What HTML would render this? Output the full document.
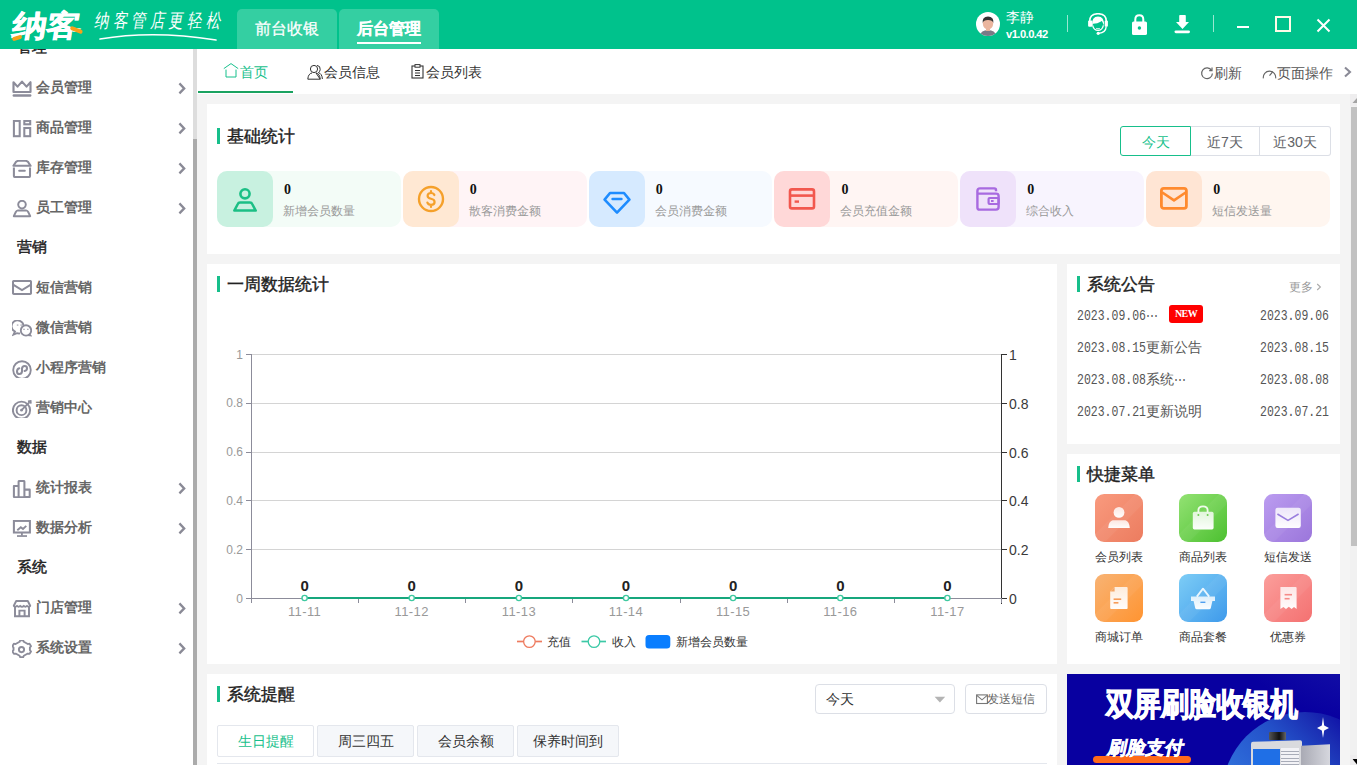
<!DOCTYPE html>
<html><head><meta charset="utf-8">
<style>
*{margin:0;padding:0;box-sizing:border-box}
html,body{width:1357px;height:765px;overflow:hidden;background:#f4f4f4;font-family:"Liberation Sans",sans-serif;color:#333}
.abs{position:absolute}
#hdr{position:absolute;left:0;top:0;width:1357px;height:49px;background:#00c28c}
.htab{position:absolute;top:9px;height:40px;background:#34cfa2;-webkit-text-stroke:0.25px #fff;border-radius:5px 5px 0 0;color:#fff;font-size:16px;line-height:40px;text-align:center}
#side{position:absolute;left:0;top:49px;width:193px;height:716px;background:#fff;overflow:hidden}
.si{position:absolute;left:0;width:193px;height:40px}
.si .ic{position:absolute;left:12px;top:12.5px;width:20px;height:18px}
.si .tx{position:absolute;left:36px;top:0;line-height:40px;font-size:14px;color:#666;font-weight:bold}
.si .ch{position:absolute;left:177px;top:15px}
.sh{position:absolute;left:17px;font-size:15px;color:#222;line-height:40px;font-weight:normal;-webkit-text-stroke:0.45px #222}
#tabbar{position:absolute;left:197px;top:49px;width:1160px;height:45px;background:#fff}
.card{position:absolute;background:#fff}
.ttl{position:absolute;left:10px;font-size:17px;color:#222;font-weight:normal;-webkit-text-stroke:0.4px #222;line-height:21px;padding-left:10px}
.ttl:before{content:"";position:absolute;left:0;top:2px;width:3px;height:16px;background:#17bf8b}
.st{position:relative;flex:1;height:56px;border-radius:10px}
.sti{position:absolute;left:0;top:0;width:56px;height:56px;border-radius:10px;display:flex;align-items:center;justify-content:center}
.stn{position:absolute;left:67px;top:10px;font-size:14px;font-weight:bold;color:#111;font-family:"Liberation Serif",serif;line-height:18px}
.stl{position:absolute;left:66px;top:31px;font-size:12px;color:#999;line-height:18px}
.btng{display:flex;height:30px}
.bt{height:30px;border:1px solid #dcdfe6;font-size:14px;color:#606266;text-align:center;line-height:30px}
.bt:first-child{border-radius:3px 0 0 3px}.bt:last-child{border-radius:0 3px 3px 0}
.bt.act{border-color:#17bf8b;color:#17bf8b}
.nr{position:absolute;left:10px;font-family:"Liberation Mono",monospace;font-size:11.5px;color:#555;line-height:20px;white-space:nowrap}
.nd{position:absolute;left:193px;font-family:"Liberation Mono",monospace;font-size:11.5px;color:#555;line-height:20px}
.cj{font-size:13.6px;font-family:"Liberation Sans",sans-serif;position:relative;top:-0.5px}.dg{display:inline-block;transform:scaleY(1.24);transform-origin:50% 60%}.el{display:inline-block;width:12.5px;font-size:12px;text-align:center;font-family:"Liberation Sans",sans-serif}
.nw{width:34px;height:17.6px;background:#f00;border-radius:3px;color:#fff;font-family:"Liberation Serif",serif;font-weight:bold;font-size:10px;line-height:17.6px;text-align:center;letter-spacing:-0.6px}
.ql{position:absolute;width:80px;text-align:center;font-size:12.3px;color:#333;line-height:20px}
.rt{top:51px;height:32px;border:1px solid #e4e7ed;background:#f5f7fa;font-size:14px;color:#333;text-align:center;line-height:30px;border-radius:2px}
.rt.act{background:#fff;color:#17bf8b}
</style></head><body>
<div id="hdr">
  
  <div class="abs" style="left:8px;top:3px;width:84px;height:42px;overflow:hidden">
    <div class="abs" style="left:8px;top:2px;font-size:30px;font-weight:700;color:#fff;-webkit-text-stroke:0.5px #fff;letter-spacing:-1px;transform:skewX(-9deg) scaleX(1.16);transform-origin:0 0;line-height:42px;white-space:nowrap">纳客</div>
    <div class="abs" style="left:4px;top:33px;width:10px;height:3.5px;background:#f7a11a;transform:rotate(-18deg);border-radius:2px"></div>
    <div class="abs" style="left:62px;top:25px;width:13px;height:3.5px;background:#f7a11a;transform:rotate(22deg);border-radius:2px"></div>
  </div>
  <div class="abs" style="left:97px;top:10px;font-size:14.5px;color:#fff;font-weight:300;letter-spacing:3.6px;transform:skewX(-10deg) scaleY(1.32);transform-origin:0 0;line-height:16px;white-space:nowrap">纳客管店更轻松</div>
  <svg class="abs" style="left:98px;top:30px" width="126" height="14" viewBox="0 0 126 14"><path d="M2 9 Q55 0 118 10" fill="none" stroke="#fff" stroke-width="1.6" stroke-linecap="round"/></svg>
  <svg class="abs" style="left:976px;top:12px" width="24" height="24" viewBox="0 0 24 24"><defs><clipPath id="av"><circle cx="12" cy="12" r="12"/></clipPath></defs><circle cx="12" cy="12" r="12" fill="#fff"/><g clip-path="url(#av)"><path d="M3 26 Q4 18 12 18 Q20 18 21 26 Z" fill="#7a7a86"/><rect x="10" y="14" width="4" height="5" fill="#e8b49c"/><ellipse cx="12" cy="11.5" rx="5.2" ry="6" fill="#eab59e"/><path d="M6.6 11 Q6 4.5 12 4.4 Q18 4.5 17.4 11 Q16.6 8 12 8 Q7.4 8 6.6 11 Z" fill="#333"/></g></svg>
  <div class="abs" style="left:1006px;top:8px;font-size:14px;color:#fff;line-height:18px">李静</div>
  <div class="abs" style="left:1006px;top:27px;font-size:11.2px;color:#fff;font-weight:bold;line-height:14px;letter-spacing:-0.55px">v1.0.0.42</div>
  <div class="abs" style="left:1067px;top:15px;width:1px;height:17px;background:rgba(255,255,255,0.6)"></div>
  <svg class="abs" style="left:1087px;top:13px" width="22" height="23" viewBox="0 0 22 23"><path d="M2.6 8.4 Q2.6 0.7 11 0.7 Q19.4 0.7 19.4 8.4" fill="none" stroke="#fff" stroke-width="1.5"/><rect x="1.1" y="7.6" width="4.2" height="6.2" rx="1" fill="#fff"/><rect x="17.7" y="7.6" width="3.2" height="6.2" rx="1" fill="#fff"/><path d="M5 12.4 Q4.6 3.6 11 3.6 Q17.4 3.6 17 12.6 L15.4 9 Q14.8 7.6 14 8.4 Q10.5 10.6 6.2 10.8 Z" fill="#fff"/><path d="M5.6 12.4 Q6.8 17.4 11 17.4 Q15.2 17.4 16.4 12.4" fill="none" stroke="#fff" stroke-width="1.3"/><path d="M9.2 15.4 Q11 16.2 12.8 15.4" fill="none" stroke="#fff" stroke-width="0.9"/><path d="M19.2 13.6 Q18.8 19.6 11.8 20.4" fill="none" stroke="#fff" stroke-width="1.3"/><circle cx="11.2" cy="20.3" r="1.6" fill="#fff"/></svg>
  <svg class="abs" style="left:1131px;top:14px" width="17" height="22" viewBox="0 0 17 22"><path d="M4.3 8 V5.5 Q4.3 1.2 8.3 1.2 Q12.3 1.2 12.3 5.5 V8" fill="none" stroke="#fff" stroke-width="2"/><rect x="1" y="7.4" width="15" height="13.6" rx="1.6" fill="#fff"/><circle cx="8.4" cy="14" r="1.7" fill="#00c28c"/></svg>
  <svg class="abs" style="left:1174px;top:14px" width="17" height="20" viewBox="0 0 17 20"><path d="M5.2 1.8 Q5.2 1 6 1 H11 Q11.8 1 11.8 1.8 V8 H15 L8.5 15 L2 8 H5.2 Z" fill="#fff"/><rect x="0.5" y="16.4" width="15.5" height="2.8" rx="1.4" fill="#fff"/></svg>
  <div class="abs" style="left:1213px;top:15px;width:1px;height:17px;background:rgba(255,255,255,0.6)"></div>
  <div class="abs" style="left:1237px;top:26px;width:12px;height:2px;background:#fff"></div>
  <div class="abs" style="left:1275px;top:16px;width:16px;height:16px;border:2px solid #fffbe8"></div>
  <svg class="abs" style="left:1316px;top:18px" width="15" height="15" viewBox="0 0 15 15"><path d="M1.5 1.5 L13.5 13.5 M13.5 1.5 L1.5 13.5" stroke="#fff" stroke-width="2"/></svg>
  <div class="htab" style="left:237px;width:100px">前台收银</div>
  <div class="htab" style="left:339px;width:100px;font-weight:bold">后台管理<div class="abs" style="left:18px;top:33px;width:64px;height:2px;background:#fff"></div></div>
</div>
<div id="side">
<div class="sh" style="top:-22px">管理</div>
<div class="si" style="top:18px"><svg class="ic" width="20" height="18" viewBox="0 0 20 18"><path d="M1.5 2.2 L5.5 6.6 L10 1.6 L14.5 6.6 L18.5 2.2 V12 H1.5 Z" fill="none" stroke="#8c8c9a" stroke-width="2.15" stroke-linejoin="round"/><rect x="0.6" y="14.2" width="18.8" height="2.5" rx="1.2" fill="#8c8c9a"/></svg><div class="tx">会员管理</div><svg class="ch" width="10" height="13" viewBox="0 0 10 13"><path d="M2.4 1.4 L7.2 6.4 L2.4 11.4" fill="none" stroke="#8a8a96" stroke-width="2.3"/></svg></div>
<div class="si" style="top:58px"><svg class="ic" width="20" height="18" viewBox="0 0 20 18"><rect x="1.9" y="0.9" width="5.8" height="15.3" fill="none" stroke="#8c8c9a" stroke-width="2.05"/><rect x="12.3" y="0.9" width="5.9" height="3.4" fill="none" stroke="#8c8c9a" stroke-width="2.05"/><rect x="12.3" y="8" width="5.9" height="8.2" fill="none" stroke="#8c8c9a" stroke-width="2.05"/></svg><div class="tx">商品管理</div><svg class="ch" width="10" height="13" viewBox="0 0 10 13"><path d="M2.4 1.4 L7.2 6.4 L2.4 11.4" fill="none" stroke="#8a8a96" stroke-width="2.3"/></svg></div>
<div class="si" style="top:98px"><svg class="ic" width="20" height="18" viewBox="0 0 20 18"><path d="M6 0.8 H14 L15.8 1.6 L18.6 5.8 H1.4 L4.2 1.6 Z" fill="none" stroke="#8c8c9a" stroke-width="2.05" stroke-linejoin="round"/><path d="M1.9 7.4 V16 Q1.9 17 3 17 H17 Q18 17 18 16 V7.4" fill="none" stroke="#8c8c9a" stroke-width="2.05"/><rect x="6.2" y="9.8" width="7.6" height="1.9" rx="0.9" fill="#8c8c9a"/></svg><div class="tx">库存管理</div><svg class="ch" width="10" height="13" viewBox="0 0 10 13"><path d="M2.4 1.4 L7.2 6.4 L2.4 11.4" fill="none" stroke="#8a8a96" stroke-width="2.3"/></svg></div>
<div class="si" style="top:138px"><svg class="ic" width="20" height="18" viewBox="0 0 20 18"><circle cx="10" cy="4.6" r="3.8" fill="none" stroke="#8c8c9a" stroke-width="1.95"/><path d="M6 10.4 H14 Q15.5 10.6 16.2 12 L18.2 16.2 H1.8 L3.8 12 Q4.5 10.6 6 10.4 Z" fill="none" stroke="#8c8c9a" stroke-width="1.95" stroke-linejoin="round"/></svg><div class="tx">员工管理</div><svg class="ch" width="10" height="13" viewBox="0 0 10 13"><path d="M2.4 1.4 L7.2 6.4 L2.4 11.4" fill="none" stroke="#8a8a96" stroke-width="2.3"/></svg></div>
<div class="sh" style="top:178px">营销</div>
<div class="si" style="top:218px"><svg class="ic" width="20" height="18" viewBox="0 0 20 18"><rect x="1" y="1" width="18" height="13" rx="0.8" fill="none" stroke="#8c8c9a" stroke-width="2.05"/><path d="M1.5 4.8 L10 10 L18.5 4.8" fill="none" stroke="#8c8c9a" stroke-width="1.95"/></svg><div class="tx">短信营销</div></div>
<div class="si" style="top:258px"><svg class="ic" width="20" height="18" viewBox="0 0 20 18"><path d="M11.5 5.5 A6 5.8 0 1 0 3 11.5 L1.5 14.6 L5 13.2 Q6.5 13.6 8 13.4" fill="none" stroke="#8c8c9a" stroke-width="1.85"/><circle cx="14" cy="10.4" r="5.2" fill="none" stroke="#8c8c9a" stroke-width="1.85"/><path d="M17.5 14 L19 15.8 L15.5 15.4" fill="#8c8c9a" stroke="#8c8c9a" stroke-width="1.25"/><rect x="4.8" y="4.6" width="1.6" height="0.9" fill="#8c8c9a"/><rect x="8.4" y="4.6" width="1.6" height="0.9" fill="#8c8c9a"/><rect x="11.2" y="8.8" width="1.6" height="0.9" fill="#8c8c9a"/><rect x="15" y="8.8" width="1.6" height="0.9" fill="#8c8c9a"/></svg><div class="tx">微信营销</div></div>
<div class="si" style="top:298px"><svg class="ic" width="20" height="18" viewBox="0 0 20 18"><circle cx="10" cy="10" r="8.8" fill="none" stroke="#8c8c9a" stroke-width="1.85"/><path d="M7.3 8.2 Q5 8.8 5 11.4 Q5 14 7.4 14 Q9.8 14 10 11.4 V8.6 Q10.2 5.9 12.6 5.9 Q15 5.9 15 8.2 Q15 10.6 12.6 10.9" fill="none" stroke="#8c8c9a" stroke-width="2.05" stroke-linecap="round"/></svg><div class="tx">小程序营销</div></div>
<div class="si" style="top:338px"><svg class="ic" width="20" height="18" viewBox="0 0 20 18"><circle cx="9.5" cy="10.2" r="8.6" fill="none" stroke="#8c8c9a" stroke-width="1.95"/><circle cx="9.5" cy="10.2" r="4.9" fill="none" stroke="#8c8c9a" stroke-width="1.95"/><circle cx="9.5" cy="10.2" r="1.4" fill="#8c8c9a"/><path d="M9.5 10.2 L17.6 2.2" stroke="#8c8c9a" stroke-width="1.85"/><path d="M16 1.4 L18.6 1 L18.8 3.6" fill="none" stroke="#8c8c9a" stroke-width="1.85"/></svg><div class="tx">营销中心</div></div>
<div class="sh" style="top:378px">数据</div>
<div class="si" style="top:418px"><svg class="ic" width="20" height="18" viewBox="0 0 20 18"><path d="M1.9 17 V6 H6.6 V17 M6.6 17 V1.6 Q6.6 1 7.3 1 H11.7 Q12.4 1 12.4 1.6 V17 M12.4 17 V9.6 H17.7 V17 Z M1.2 17.2 H18.4" fill="none" stroke="#8c8c9a" stroke-width="2.05" stroke-linejoin="round"/></svg><div class="tx">统计报表</div><svg class="ch" width="10" height="13" viewBox="0 0 10 13"><path d="M2.4 1.4 L7.2 6.4 L2.4 11.4" fill="none" stroke="#8a8a96" stroke-width="2.3"/></svg></div>
<div class="si" style="top:458px"><svg class="ic" width="20" height="18" viewBox="0 0 20 18"><rect x="1.9" y="0.9" width="16" height="11.6" fill="none" stroke="#8c8c9a" stroke-width="2.05"/><path d="M5.3 10.3 L8.8 7.2 L11 9 L14.3 5.9" fill="none" stroke="#8c8c9a" stroke-width="1.85"/><rect x="9" y="12.6" width="1.8" height="3" fill="#8c8c9a"/><rect x="5" y="15.2" width="10" height="1.7" fill="#8c8c9a"/></svg><div class="tx">数据分析</div><svg class="ch" width="10" height="13" viewBox="0 0 10 13"><path d="M2.4 1.4 L7.2 6.4 L2.4 11.4" fill="none" stroke="#8a8a96" stroke-width="2.3"/></svg></div>
<div class="sh" style="top:498px">系统</div>
<div class="si" style="top:538px"><svg class="ic" width="20" height="18" viewBox="0 0 20 18"><path d="M4.2 1 H15.8 L18.2 5.8 Q16.6 7.6 15 5.9 Q13.4 7.6 11.8 5.9 Q10 7.6 8.2 5.9 Q6.6 7.6 5 5.9 Q3.4 7.6 1.8 5.8 Z" fill="none" stroke="#8c8c9a" stroke-width="1.95" stroke-linejoin="round"/><path d="M3 6.6 V16.3 H17 V6.6" fill="none" stroke="#8c8c9a" stroke-width="1.95"/><path d="M7.4 16.3 V10.6 H12.6 V16.3" fill="none" stroke="#8c8c9a" stroke-width="1.95"/></svg><div class="tx">门店管理</div><svg class="ch" width="10" height="13" viewBox="0 0 10 13"><path d="M2.4 1.4 L7.2 6.4 L2.4 11.4" fill="none" stroke="#8a8a96" stroke-width="2.3"/></svg></div>
<div class="si" style="top:578px"><svg class="ic" width="20" height="18" viewBox="0 0 20 18"><path d="M8 1 H11 L11.6 2.6 L15.6 4.9 L17.3 4.6 L18.8 7.2 L17.7 8.6 V11.4 L18.8 12.8 L17.3 15.4 L15.6 15.1 L11.6 17.4 L11 19 H8 L7.4 17.4 L3.4 15.1 L1.7 15.4 L0.2 12.8 L1.3 11.4 V8.6 L0.2 7.2 L1.7 4.6 L3.4 4.9 L7.4 2.6 Z" transform="translate(0.2,-0.6) scale(1,0.94)" fill="none" stroke="#8c8c9a" stroke-width="1.9" stroke-linejoin="round"/><circle cx="9.5" cy="9.6" r="2.6" fill="none" stroke="#8c8c9a" stroke-width="1.95"/></svg><div class="tx">系统设置</div><svg class="ch" width="10" height="13" viewBox="0 0 10 13"><path d="M2.4 1.4 L7.2 6.4 L2.4 11.4" fill="none" stroke="#8a8a96" stroke-width="2.3"/></svg></div>
</div>
<div class="abs" style="left:193px;top:49px;width:4px;height:716px;background:#dddddd"></div>
<div class="abs" style="left:193px;top:139px;width:4px;height:626px;background:#ababab"></div>
<div id="tabbar">
  <div class="abs" style="left:1px;top:42px;width:95px;height:2px;background:#1aa260"></div>
  <svg class="abs" style="left:26px;top:14px" width="16" height="15" viewBox="0 0 16 15"><path d="M0.8 5.6 L8 0.6 L15.2 5.6 M3 6.6 V14 H13 V6.6" fill="none" stroke="#17c08c" stroke-width="1" /></svg>
  <div class="abs" style="left:43px;top:13px;font-size:14px;color:#17c08c;line-height:20px">首页</div>
  <svg class="abs" style="left:110px;top:15px" width="16" height="16" viewBox="0 0 16 16"><circle cx="7" cy="5" r="3.6" fill="none" stroke="#333" stroke-width="1"/><path d="M0.8 15.2 Q1.2 9.6 5 9 M9 9 Q12.8 9.6 13.2 15.2 Z M0.8 15.2 H13.2" fill="none" stroke="#333" stroke-width="1"/><path d="M10 1.4 Q13.6 1.8 13.2 5.6 Q13 7.6 11.4 8.6 Q15 9.6 15.4 15" fill="none" stroke="#333" stroke-width="1"/></svg>
  <div class="abs" style="left:127px;top:13px;font-size:14px;color:#333;line-height:20px">会员信息</div>
  <svg class="abs" style="left:214px;top:15px" width="14" height="15" viewBox="0 0 14 15"><rect x="1" y="2" width="11" height="12" fill="none" stroke="#333" stroke-width="1.1"/><rect x="4" y="0.6" width="5" height="2.6" fill="#fff" stroke="#333" stroke-width="1"/><path d="M4 6.5 H9 M4 9 H9 M4 11.5 H9" stroke="#333" stroke-width="1"/></svg>
  <div class="abs" style="left:229px;top:13px;font-size:14px;color:#333;line-height:20px">会员列表</div>
  <svg class="abs" style="left:1003px;top:17px" width="14" height="14" viewBox="0 0 14 14"><path d="M11.6 4.4 A5.4 5.4 0 1 0 12.4 7.5" fill="none" stroke="#666" stroke-width="1.2"/><path d="M9.2 4.6 H12 V1.6" fill="none" stroke="#666" stroke-width="1.2"/></svg>
  <div class="abs" style="left:1017px;top:14px;font-size:14px;color:#555;line-height:20px">刷新</div>
  <svg class="abs" style="left:1065px;top:17px" width="15" height="13" viewBox="0 0 15 13"><path d="M1.4 12.4 A6.2 6.2 0 1 1 13.6 12.4" fill="none" stroke="#666" stroke-width="1.1"/><path d="M7.5 9.6 L10.8 5.6" stroke="#666" stroke-width="1.2"/></svg>
  <div class="abs" style="left:1080px;top:14px;font-size:14px;color:#555;line-height:20px">页面操作</div>
  <svg class="abs" style="left:1146px;top:17px" width="10" height="12" viewBox="0 0 10 12"><path d="M2 1.4 L7 6 L2 10.6" fill="none" stroke="#8a8a96" stroke-width="2.1"/></svg>
</div>
<div class="card" style="left:207px;top:104px;width:1133px;height:150px">
  <div class="ttl" style="top:22px">基础统计</div>
  <div class="abs btng" style="left:913px;top:22px">
    <div class="bt act" style="width:71px">今天</div><div class="bt" style="width:69px;border-left:none">近7天</div><div class="bt" style="width:71px;border-left:none">近30天</div>
  </div>
  <div class="abs" style="left:10px;top:67px;width:1113px;height:56px;display:flex;gap:2px"><div class="st" style="background:#f3fcf7"><div class="sti" style="background:#c8f1e0"><svg width="26" height="26" viewBox="0 0 26 26" style="margin-top:1px"><circle cx="13" cy="6.8" r="4.6" fill="none" stroke="#1bbf85" stroke-width="2.6"/><path d="M8 15.6 H18 Q19.6 15.6 20.2 17 L23.7 23.6 H2.3 L5.8 17 Q6.4 15.6 8 15.6 Z" fill="none" stroke="#1bbf85" stroke-width="2.5" stroke-linejoin="round"/></svg></div><div class="stn">0</div><div class="stl">新增会员数量</div></div><div class="st" style="background:#fff4f6"><div class="sti" style="background:#ffe8d3"><svg width="28" height="28" viewBox="0 0 28 28"><circle cx="14" cy="14" r="12" fill="none" stroke="#f5a02a" stroke-width="2.4"/><path d="M17.4 10 Q16.6 8 14 8 Q10.6 8 10.6 10.8 Q10.6 13 14 13.8 Q17.6 14.6 17.6 17 Q17.6 19.8 14 19.8 Q11.2 19.8 10.4 17.6 M14 6 V8 M14 19.8 V22" fill="none" stroke="#f5a02a" stroke-width="2.2" stroke-linecap="round"/></svg></div><div class="stn">0</div><div class="stl">散客消费金额</div></div><div class="st" style="background:#f6faff"><div class="sti" style="background:#d6eaff"><svg width="28" height="28" viewBox="0 0 28 28" style="margin-top:5px"><path d="M7 5 H21 L26.4 11.6 L14 24.6 L1.6 11.6 Z" fill="none" stroke="#1e8cff" stroke-width="2.6" stroke-linejoin="round"/><path d="M9.6 11 H18.4" stroke="#1e8cff" stroke-width="2.6" stroke-linecap="round"/></svg></div><div class="stn">0</div><div class="stl">会员消费金额</div></div><div class="st" style="background:#fff5f3"><div class="sti" style="background:#ffd8d8"><svg width="28" height="28" viewBox="0 0 28 28"><rect x="2" y="4.4" width="24" height="19" rx="2" fill="none" stroke="#f2574e" stroke-width="2.6"/><path d="M2 10.6 H26" stroke="#f2574e" stroke-width="2.6"/><path d="M6.6 16.6 H11" stroke="#f2574e" stroke-width="2.4"/></svg></div><div class="stn">0</div><div class="stl">会员充值金额</div></div><div class="st" style="background:#f8f4fe"><div class="sti" style="background:#efe2fa"><svg width="28" height="28" viewBox="0 0 28 28"><path d="M22 6.2 V5 Q22 3.4 20.4 3.4 H6 Q3.4 3.4 3.4 6 V22.4 Q3.4 24.6 5.6 24.6 H22 Q24.6 24.6 24.6 22 V11 Q24.6 8.6 22 8.6 H3.6" fill="none" stroke="#a86ae0" stroke-width="2.4"/><rect x="14.6" y="13" width="10" height="6" rx="1" fill="none" stroke="#a86ae0" stroke-width="2.2"/><rect x="17" y="15" width="2.6" height="2" fill="#a86ae0"/></svg></div><div class="stn">0</div><div class="stl">综合收入</div></div><div class="st" style="background:#fff6f0"><div class="sti" style="background:#ffe5d4"><svg width="30" height="28" viewBox="0 0 30 28"><rect x="2.4" y="3.4" width="25" height="20" rx="2.4" fill="none" stroke="#ff8a2e" stroke-width="2.8"/><path d="M3 7.2 L15 15.4 L27 7.2" fill="none" stroke="#ff8a2e" stroke-width="2.6" stroke-linejoin="round"/></svg></div><div class="stn">0</div><div class="stl">短信发送量</div></div></div>
</div>
<div class="card" style="left:207px;top:264px;width:850px;height:400px">
  <div class="ttl" style="top:10px">一周数据统计</div>
  <svg class="abs" style="left:0;top:0" width="850" height="400" viewBox="207 264 850 400">
<line x1="251" y1="354.5" x2="1001" y2="354.5" stroke="#d4d4d4" stroke-width="1"/>
<line x1="246" y1="354.5" x2="251" y2="354.5" stroke="#8c8c9a" stroke-width="1"/>
<line x1="1001" y1="354.5" x2="1007" y2="354.5" stroke="#333" stroke-width="1"/>
<line x1="251" y1="403.5" x2="1001" y2="403.5" stroke="#d4d4d4" stroke-width="1"/>
<line x1="246" y1="403.5" x2="251" y2="403.5" stroke="#8c8c9a" stroke-width="1"/>
<line x1="1001" y1="403.5" x2="1007" y2="403.5" stroke="#333" stroke-width="1"/>
<line x1="251" y1="452.5" x2="1001" y2="452.5" stroke="#d4d4d4" stroke-width="1"/>
<line x1="246" y1="452.5" x2="251" y2="452.5" stroke="#8c8c9a" stroke-width="1"/>
<line x1="1001" y1="452.5" x2="1007" y2="452.5" stroke="#333" stroke-width="1"/>
<line x1="251" y1="500.5" x2="1001" y2="500.5" stroke="#d4d4d4" stroke-width="1"/>
<line x1="246" y1="500.5" x2="251" y2="500.5" stroke="#8c8c9a" stroke-width="1"/>
<line x1="1001" y1="500.5" x2="1007" y2="500.5" stroke="#333" stroke-width="1"/>
<line x1="251" y1="549.5" x2="1001" y2="549.5" stroke="#d4d4d4" stroke-width="1"/>
<line x1="246" y1="549.5" x2="251" y2="549.5" stroke="#8c8c9a" stroke-width="1"/>
<line x1="1001" y1="549.5" x2="1007" y2="549.5" stroke="#333" stroke-width="1"/>
<line x1="251" y1="598.5" x2="1001" y2="598.5" stroke="#d4d4d4" stroke-width="1"/>
<line x1="246" y1="598.5" x2="251" y2="598.5" stroke="#8c8c9a" stroke-width="1"/>
<line x1="1001" y1="598.5" x2="1007" y2="598.5" stroke="#333" stroke-width="1"/>
<text x="243" y="358.5" text-anchor="end" font-size="12" fill="#999">1</text>
<text x="1009" y="360.0" font-size="14" fill="#3a3a3a">1</text>
<text x="243" y="407.3" text-anchor="end" font-size="12" fill="#999">0.8</text>
<text x="1009" y="408.8" font-size="14" fill="#3a3a3a">0.8</text>
<text x="243" y="456.1" text-anchor="end" font-size="12" fill="#999">0.6</text>
<text x="1009" y="457.6" font-size="14" fill="#3a3a3a">0.6</text>
<text x="243" y="504.9" text-anchor="end" font-size="12" fill="#999">0.4</text>
<text x="1009" y="506.4" font-size="14" fill="#3a3a3a">0.4</text>
<text x="243" y="553.7" text-anchor="end" font-size="12" fill="#999">0.2</text>
<text x="1009" y="555.2" font-size="14" fill="#3a3a3a">0.2</text>
<text x="243" y="602.5" text-anchor="end" font-size="12" fill="#999">0</text>
<text x="1009" y="604.0" font-size="14" fill="#3a3a3a">0</text>
<line x1="251.5" y1="354" x2="251.5" y2="598" stroke="#8c8c9a" stroke-width="1"/>
<line x1="1001.5" y1="354" x2="1001.5" y2="604" stroke="#333" stroke-width="1"/>
<line x1="251" y1="598.5" x2="1001" y2="598.5" stroke="#8c8c9a" stroke-width="1"/>
<line x1="251.5" y1="598" x2="251.5" y2="603" stroke="#8c8c9a" stroke-width="1"/>
<line x1="358.5" y1="598" x2="358.5" y2="603" stroke="#8c8c9a" stroke-width="1"/>
<line x1="465.5" y1="598" x2="465.5" y2="603" stroke="#8c8c9a" stroke-width="1"/>
<line x1="572.5" y1="598" x2="572.5" y2="603" stroke="#8c8c9a" stroke-width="1"/>
<line x1="680.5" y1="598" x2="680.5" y2="603" stroke="#8c8c9a" stroke-width="1"/>
<line x1="787.5" y1="598" x2="787.5" y2="603" stroke="#8c8c9a" stroke-width="1"/>
<line x1="894.5" y1="598" x2="894.5" y2="603" stroke="#8c8c9a" stroke-width="1"/>
<line x1="1001.5" y1="598" x2="1001.5" y2="603" stroke="#8c8c9a" stroke-width="1"/>
<line x1="304.6" y1="598" x2="947.4" y2="598" stroke="#17a77d" stroke-width="2"/>
<circle cx="304.6" cy="598" r="2.6" fill="#fff" stroke="#3fc9a0" stroke-width="1.4"/>
<text x="304.6" y="591" text-anchor="middle" font-size="15" font-weight="bold" fill="#222">0</text>
<text x="304.6" y="616" text-anchor="middle" font-size="13" letter-spacing="0.4" fill="#999">11-11</text>
<circle cx="411.7" cy="598" r="2.6" fill="#fff" stroke="#3fc9a0" stroke-width="1.4"/>
<text x="411.7" y="591" text-anchor="middle" font-size="15" font-weight="bold" fill="#222">0</text>
<text x="411.7" y="616" text-anchor="middle" font-size="13" letter-spacing="0.4" fill="#999">11-12</text>
<circle cx="518.9" cy="598" r="2.6" fill="#fff" stroke="#3fc9a0" stroke-width="1.4"/>
<text x="518.9" y="591" text-anchor="middle" font-size="15" font-weight="bold" fill="#222">0</text>
<text x="518.9" y="616" text-anchor="middle" font-size="13" letter-spacing="0.4" fill="#999">11-13</text>
<circle cx="626.0" cy="598" r="2.6" fill="#fff" stroke="#3fc9a0" stroke-width="1.4"/>
<text x="626.0" y="591" text-anchor="middle" font-size="15" font-weight="bold" fill="#222">0</text>
<text x="626.0" y="616" text-anchor="middle" font-size="13" letter-spacing="0.4" fill="#999">11-14</text>
<circle cx="733.1" cy="598" r="2.6" fill="#fff" stroke="#3fc9a0" stroke-width="1.4"/>
<text x="733.1" y="591" text-anchor="middle" font-size="15" font-weight="bold" fill="#222">0</text>
<text x="733.1" y="616" text-anchor="middle" font-size="13" letter-spacing="0.4" fill="#999">11-15</text>
<circle cx="840.3" cy="598" r="2.6" fill="#fff" stroke="#3fc9a0" stroke-width="1.4"/>
<text x="840.3" y="591" text-anchor="middle" font-size="15" font-weight="bold" fill="#222">0</text>
<text x="840.3" y="616" text-anchor="middle" font-size="13" letter-spacing="0.4" fill="#999">11-16</text>
<circle cx="947.4" cy="598" r="2.6" fill="#fff" stroke="#3fc9a0" stroke-width="1.4"/>
<text x="947.4" y="591" text-anchor="middle" font-size="15" font-weight="bold" fill="#222">0</text>
<text x="947.4" y="616" text-anchor="middle" font-size="13" letter-spacing="0.4" fill="#999">11-17</text>
<line x1="517" y1="641.5" x2="542" y2="641.5" stroke="#ee7b5f" stroke-width="1.7"/><circle cx="529.4" cy="641.6" r="5.8" fill="#fff" stroke="#ee7b5f" stroke-width="1.3"/>
<text x="547" y="646" font-size="12" fill="#333">充值</text>
<line x1="581.5" y1="641.5" x2="606" y2="641.5" stroke="#3cc9a6" stroke-width="1.7"/><circle cx="594" cy="641.6" r="5.8" fill="#fff" stroke="#3cc9a6" stroke-width="1.3"/>
<text x="612" y="646" font-size="12" fill="#333">收入</text>
<rect x="645.5" y="635" width="24.8" height="13.6" rx="3.5" fill="#0a7eff"/>
<text x="676" y="646" font-size="12" fill="#333">新增会员数量</text>
</svg>
</div>
<div class="card" style="left:1067px;top:264px;width:273px;height:180px">
  <div class="ttl" style="top:10px">系统公告</div>
  <div class="abs" style="left:222px;top:15px;font-size:12px;color:#999;line-height:16px">更多</div>
  <svg class="abs" style="left:249px;top:19px" width="6" height="8" viewBox="0 0 6 8"><path d="M1.2 1 L4.4 4 L1.2 7" fill="none" stroke="#aaa" stroke-width="1.1"/></svg>
  <div class="nr" style="top:42.4px"><span class="dg">2023.09.06</span><span class="el">⋯</span></div><div class="nd" style="top:43.4px"><span class="dg">2023.09.06</span></div><div class="abs nw" style="left:102px;top:41.0px">NEW</div><div class="nr" style="top:74.4px"><span class="dg">2023.08.15</span><span class="cj">更新公告</span></div><div class="nd" style="top:75.4px"><span class="dg">2023.08.15</span></div><div class="nr" style="top:106.4px"><span class="dg">2023.08.08</span><span class="cj">系统</span><span class="el">⋯</span></div><div class="nd" style="top:107.4px"><span class="dg">2023.08.08</span></div><div class="nr" style="top:138.4px"><span class="dg">2023.07.21</span><span class="cj">更新说明</span></div><div class="nd" style="top:139.4px"><span class="dg">2023.07.21</span></div>
</div>
<div class="card" style="left:1067px;top:454px;width:273px;height:210px">
  <svg width="0" height="0" style="position:absolute"><defs><linearGradient id="wg1" x1="0" y1="0" x2="0" y2="1"><stop offset="0" stop-color="#fff" stop-opacity="0.78"/><stop offset="1" stop-color="#fff" stop-opacity="0.98"/></linearGradient><linearGradient id="wg2" x1="0" y1="0" x2="0" y2="1"><stop offset="0" stop-color="#fff" stop-opacity="0.78"/><stop offset="1" stop-color="#fff" stop-opacity="0.98"/></linearGradient><linearGradient id="wg3" x1="0" y1="0" x2="0" y2="1"><stop offset="0" stop-color="#fff" stop-opacity="0.78"/><stop offset="1" stop-color="#fff" stop-opacity="0.98"/></linearGradient><linearGradient id="wg4" x1="0" y1="0" x2="0" y2="1"><stop offset="0" stop-color="#fff" stop-opacity="0.78"/><stop offset="1" stop-color="#fff" stop-opacity="0.98"/></linearGradient><linearGradient id="wg5" x1="0" y1="0" x2="0" y2="1"><stop offset="0" stop-color="#fff" stop-opacity="0.78"/><stop offset="1" stop-color="#fff" stop-opacity="0.98"/></linearGradient><linearGradient id="wg6" x1="0" y1="0" x2="0" y2="1"><stop offset="0" stop-color="#fff" stop-opacity="0.78"/><stop offset="1" stop-color="#fff" stop-opacity="0.98"/></linearGradient></defs></svg>
  <div class="ttl" style="top:10px">快捷菜单</div>
  <svg class="abs" style="left:28px;top:39.60000000000002px" width="48" height="48" viewBox="0 0 48 48"><defs><linearGradient id="qg0" x1="0" y1="0" x2="1" y2="1"><stop offset="0" stop-color="#f99a7e"/><stop offset="1" stop-color="#ec7c5f"/></linearGradient></defs><rect width="48" height="48" rx="9" fill="url(#qg0)"/><path d="M0 40 L40 0 H48 V10 L10 48 H0 Z" fill="#fff" opacity="0.05"/><circle cx="24" cy="18.4" r="5.4" fill="url(#wg1)"/><path d="M17.6 26.2 H30.4 Q34.4 27.4 34.8 34 H13.2 Q13.6 27.4 17.6 26.2 Z" fill="url(#wg1)"/></svg><div class="ql" style="left:12px;top:93.20000000000005px">会员列表</div><svg class="abs" style="left:112px;top:39.60000000000002px" width="48" height="48" viewBox="0 0 48 48"><defs><linearGradient id="qg1" x1="0" y1="0" x2="1" y2="1"><stop offset="0" stop-color="#93e273"/><stop offset="1" stop-color="#4cc030"/></linearGradient></defs><rect width="48" height="48" rx="9" fill="url(#qg1)"/><path d="M0 40 L40 0 H48 V10 L10 48 H0 Z" fill="#fff" opacity="0.05"/><path d="M19.4 18.6 V16.2 Q19.4 12.4 24 12.4 Q28.6 12.4 28.6 16.2 V18.6" fill="none" stroke="#f0fbea" stroke-width="1.8"/><rect x="13.8" y="17.8" width="20.8" height="17.6" rx="1.6" fill="url(#wg2)"/><circle cx="19.4" cy="21" r="1" fill="#6ccf4e"/><circle cx="28.6" cy="21" r="1" fill="#6ccf4e"/></svg><div class="ql" style="left:96px;top:93.20000000000005px">商品列表</div><svg class="abs" style="left:197px;top:39.60000000000002px" width="48" height="48" viewBox="0 0 48 48"><defs><linearGradient id="qg2" x1="0" y1="0" x2="1" y2="1"><stop offset="0" stop-color="#bb9cf0"/><stop offset="1" stop-color="#9b76db"/></linearGradient></defs><rect width="48" height="48" rx="9" fill="url(#qg2)"/><path d="M0 40 L40 0 H48 V10 L10 48 H0 Z" fill="#fff" opacity="0.05"/><rect x="11.4" y="13.8" width="25.4" height="20.2" rx="2.2" fill="url(#wg3)"/><path d="M13.4 20 L24 26.4 L34.6 20" fill="none" stroke="#9a7ede" stroke-width="1.6"/></svg><div class="ql" style="left:181px;top:93.20000000000005px">短信发送</div><svg class="abs" style="left:28px;top:119.60000000000002px" width="48" height="48" viewBox="0 0 48 48"><defs><linearGradient id="qg3" x1="0" y1="0" x2="1" y2="1"><stop offset="0" stop-color="#f8b374"/><stop offset="1" stop-color="#ff9431"/></linearGradient></defs><rect width="48" height="48" rx="9" fill="url(#qg3)"/><path d="M0 40 L40 0 H48 V10 L10 48 H0 Z" fill="#fff" opacity="0.05"/><g transform="translate(0,-3.6)"><path d="M19.6 16.6 H31.6 Q32.6 16.6 32.6 17.6 V37.6 Q32.6 38.6 31.6 38.6 H16.2 Q15.2 38.6 15.2 37.6 V21 Z" fill="url(#wg4)"/><path d="M15.2 21 H19.6 V16.6 Z" fill="#f4a766"/><rect x="18.6" y="28" width="7.6" height="1.6" fill="#f79c58"/><rect x="18.6" y="31.6" width="4.8" height="1.6" fill="#f79c58"/></g></svg><div class="ql" style="left:12px;top:173px">商城订单</div><svg class="abs" style="left:112px;top:119.60000000000002px" width="48" height="48" viewBox="0 0 48 48"><defs><linearGradient id="qg4" x1="0" y1="0" x2="1" y2="1"><stop offset="0" stop-color="#7dcdf6"/><stop offset="1" stop-color="#3e9aeb"/></linearGradient></defs><rect width="48" height="48" rx="9" fill="url(#qg4)"/><path d="M0 40 L40 0 H48 V10 L10 48 H0 Z" fill="#fff" opacity="0.05"/><path d="M17.8 22.6 L24 14.6 L30.2 22.6" fill="none" stroke="#eaf6fe" stroke-width="1.8" stroke-linejoin="round"/><path d="M12 22.4 H36 V26.9 H33.4 L31.8 34 Q31.5 35.2 30.2 35.2 H17.8 Q16.5 35.2 16.2 34 L14.6 26.9 H12 Z" fill="url(#wg5)"/><rect x="21.4" y="27.6" width="5" height="1.4" fill="#4f9ff0"/></svg><div class="ql" style="left:96px;top:173px">商品套餐</div><svg class="abs" style="left:197px;top:119.60000000000002px" width="48" height="48" viewBox="0 0 48 48"><defs><linearGradient id="qg5" x1="0" y1="0" x2="1" y2="1"><stop offset="0" stop-color="#fb9e9b"/><stop offset="1" stop-color="#f47171"/></linearGradient></defs><rect width="48" height="48" rx="9" fill="url(#qg5)"/><path d="M0 40 L40 0 H48 V10 L10 48 H0 Z" fill="#fff" opacity="0.05"/><g transform="translate(0,-3.5)"><path d="M16.4 16.6 H31.6 Q32.6 16.6 32.6 17.6 V38.6 L30 36.4 L27.6 38.6 L24.8 36.2 L22 38.6 L19.4 36.4 L16.4 38.6 Z" fill="url(#wg6)"/><rect x="20.6" y="23.4" width="7.4" height="1.6" fill="#f58b88"/><rect x="20.6" y="27.4" width="5" height="1.6" fill="#f58b88"/></g></svg><div class="ql" style="left:181px;top:173px">优惠券</div>
</div>
<div class="card" style="left:207px;top:674px;width:850px;height:91px">
  <div class="ttl" style="top:10px">系统提醒</div>
  <div class="abs" style="left:608px;top:10px;width:140px;height:30px;border:1px solid #dcdfe6;border-radius:4px">
    <div class="abs" style="left:10px;top:5px;font-size:14px;color:#333;line-height:18px">今天</div>
    <svg class="abs" style="left:118px;top:11px" width="12" height="8" viewBox="0 0 12 8"><path d="M0.6 0.8 H11.2 L5.9 6.6 Z" fill="#b4b4b4"/></svg>
  </div>
  <div class="abs" style="left:758px;top:10px;width:82px;height:30px;border:1px solid #dcdfe6;border-radius:4px">
    <svg class="abs" style="left:10px;top:9px" width="12" height="11" viewBox="0 0 12 11"><rect x="0.6" y="0.9" width="10.8" height="8.6" fill="none" stroke="#777" stroke-width="1.1"/><path d="M0.8 1.4 L6 5.8 L11.2 1.4" fill="none" stroke="#777" stroke-width="1.1"/></svg>
    <div class="abs" style="left:21px;top:6px;font-size:12px;color:#666;line-height:17px">发送短信</div>
  </div>
  <div class="abs rt act" style="left:10px;width:97px">生日提醒</div>
  <div class="abs rt" style="left:110px;width:97px">周三四五</div>
  <div class="abs rt" style="left:210px;width:97px">会员余额</div>
  <div class="abs rt" style="left:310px;width:102px">保养时间到</div>
  <div class="abs" style="left:10px;top:89px;width:830px;height:1px;background:#e4e7ed"></div>
</div>
<div class="abs" style="left:1067px;top:674px;width:273px;height:91px;background:#0800a0;overflow:hidden">
  <div class="abs" style="left:120px;top:-80px;width:240px;height:150px;background:radial-gradient(ellipse at 100% 0%, rgba(60,70,190,0.6), rgba(8,0,160,0) 65%)"></div>
  <div class="abs" style="left:155px;top:38px;width:166px;height:166px;border-radius:50%;background:linear-gradient(45deg,#3275dc 30%,#2a62d4 45%,#2350c8 60%,#1a2cb2 75%,#0c08a4 88%)"></div>
  <div class="abs" style="left:39px;top:10px;font-size:28px;font-weight:900;color:#fff;-webkit-text-stroke:0.9px #fff;line-height:36px;letter-spacing:-0.6px;white-space:nowrap;transform:scaleY(1.14);transform-origin:0 0">双屏刷脸收银机</div>
  <div class="abs" style="left:26px;top:82px;width:98px;height:7px;background:#ff6a1a;border-radius:4px"></div>
  <div class="abs" style="left:41px;top:62px;font-size:18.5px;font-weight:900;color:#fff;-webkit-text-stroke:0.6px #fff;line-height:24px;transform:skewX(-12deg);white-space:nowrap">刷脸支付</div>
  <svg class="abs" style="left:249px;top:43px" width="14" height="22" viewBox="0 0 14 22"><path d="M7 0 L8.2 8.6 L13 11 L8.2 13.4 L7 21 L5.8 13.4 L1 11 L5.8 8.6 Z" fill="#fff"/></svg>
  <div class="abs" style="left:202px;top:58px;width:17px;height:8px;background:linear-gradient(90deg,#555,#111 60%,#666);border-radius:1px"></div>
  <div class="abs" style="left:184px;top:67px;width:51px;height:30px;background:#d9dade;border-radius:2px;transform:skewY(-2deg)"></div>
  <div class="abs" style="left:186px;top:75px;width:27px;height:22px;background:#1f6fe6"></div>
  <div class="abs" style="left:214px;top:74px;width:18px;height:23px;background:repeating-linear-gradient(#f2f2f6 0 2.5px,#a8acb8 2.5px 3.5px)"></div>
  <div class="abs" style="left:234px;top:71px;width:29px;height:26px;background:linear-gradient(90deg,#a9aab4,#d6d7de);transform:skewY(-3deg)"></div>
</div>
<div class="abs" style="left:1350px;top:94px;width:7px;height:671px;background:#f1f1f1"></div>
<div class="abs" style="left:1351px;top:107px;width:6px;height:439px;background:#c1c1c1"></div>
<div class="abs" style="left:1350px;top:94px;width:7px;height:12px;background:#eeedee"></div>
<svg class="abs" style="left:1350px;top:94px" width="7" height="12" viewBox="0 0 7 12"><path d="M2.5 9 L7 4 V9 Z" fill="#a3a3a3"/></svg>
<div class="abs" style="left:1350px;top:755px;width:7px;height:10px;background:#eeedee"></div>
<svg class="abs" style="left:1350px;top:755px" width="7" height="10" viewBox="0 0 7 10"><path d="M2.6 4 H7 V9.5 Z" fill="#000"/></svg>
</body></html>
